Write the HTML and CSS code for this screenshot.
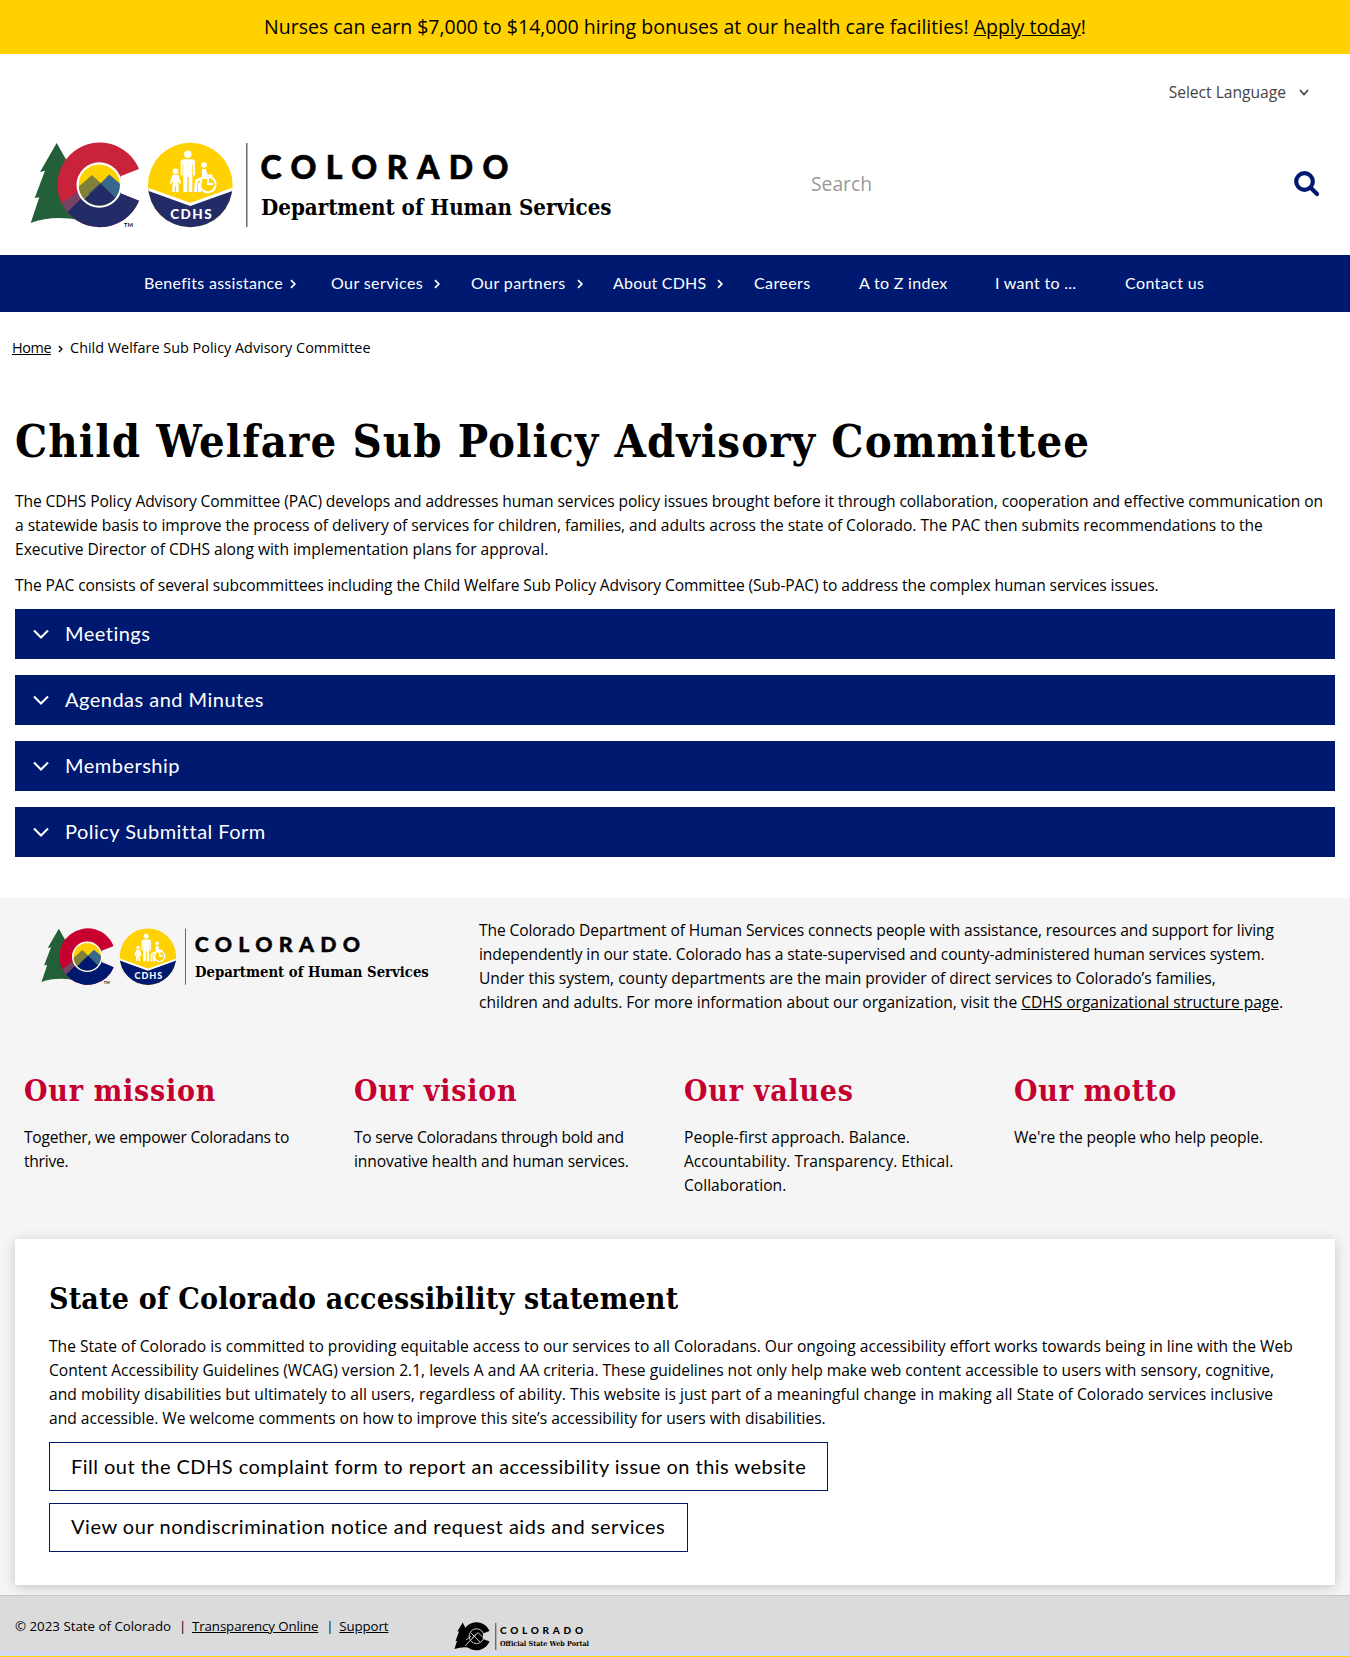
FILE: index.html
```html
<!DOCTYPE html>
<html lang="en">
<head>
<meta charset="utf-8">
<title>Child Welfare Sub Policy Advisory Committee</title>
<link rel="stylesheet" href="styles.css">
</head>
<body>
<svg class="sprite" aria-hidden="true">
  <defs>
    <clipPath id="scene"><circle cx="69.3" cy="43" r="20.6"/></clipPath>
    <clipPath id="seal"><circle cx="160.3" cy="43" r="42.3"/></clipPath>
    <clipPath id="cshape"><path d="M109 27A42.3 42.3 0 1 0 109 58.7L91 51.5V34Z"/></clipPath>
  </defs>
  <symbol id="chevron-right" viewBox="0 0 6 10"><path class="stroke" d="M1 1.2 4.8 5 1 8.8"/></symbol>
  <symbol id="chevron-down" viewBox="0 0 16 10"><path class="stroke" d="M1 1.5 8 8.5 15 1.5"/></symbol>
</svg>

<div class="banner"><span>Nurses can earn $7,000 to $14,000 hiring bonuses at our health care facilities! <a href="#">Apply today</a>!</span></div>

<header class="header">
  <div class="language"><span>Select Language</span><svg viewBox="0 0 10 7"><path class="stroke" d="M1 1 5 5.5 9 1"/></svg></div>
  <div class="brand-row">
    <svg class="logo" viewBox="0 0 590 88">
      <g id="logo">
        <path class="tree" d="M26.7 1 42 28 50 78Q22 73 .7 81L9.3 55.3 4.7 56 15 28.7 10 30Z"/>
        <g clip-path="url(#cshape)">
          <rect class="red" x="25" width="90" height="88"/>
          <path class="plum" d="M25 66 49 49 60 70 30 90Z"/>
          <path class="violet" d="M44 67 60 50 70 56 50 73Z"/>
          <path class="navy" d="M69 39 112 52V88H56L37.5 70Z"/>
        </g>
        <circle class="white" cx="69.3" cy="43" r="22.8"/>
        <g clip-path="url(#scene)">
          <rect class="gold" x="45" y="20" width="50" height="46"/>
          <path class="olive" d="M45 48 62 33 80 50 66 66H45Z"/>
          <path class="teal" d="M62 50 79.3 32.5 95 46V66H70Z"/>
          <path class="slate" d="M58 52 70.7 40.7 82 52Z"/>
          <path class="navy" d="M44 67 70.7 42 97 67Z"/>
        </g>
        <text class="tm" x="94" y="84.5" textLength="9">TM</text>
        <g clip-path="url(#seal)">
          <rect class="gold" x="117" width="87" height="88"/>
          <path class="navy" d="M117 46.5 160.3 63 204 46.5V88H117Z"/>
          <path class="vee" d="M116 46.5 160.3 62.5 205 46.5"/>
        </g>
        <g class="white">
          <circle cx="157.8" cy="12.3" r="3.7"/>
          <path d="M154 17.3h8q3 0 3 3V33.5h-2V22.5l-.6 0V50h-3.8V35h-1.4V50H153.2V22.5h-.6V33.5H150.6V20.3q0-3 3.4-3Z"/>
          <circle cx="145.5" cy="29.4" r="2.8"/>
          <path d="M142.5 33h6l2.6 8-1.6 1-2-3.5 1.2 6V50h-2.6v-6h-1.2v6h-2.6v-5.5l1-6-2 3.5-1.6-1Z"/>
          <circle cx="174" cy="23" r="2.8"/>
          <path d="M172 27h4l1.5 5.5h5v2h-5V37h-5.5Z"/>
          <path d="M171.5 35 173 37l-5.5 2.5-.5 10.5h-3l1-12ZM173.5 38.5l-2.5 2.5v9h-3v-9Z"/>
        </g>
        <path class="wheel" d="M179 34.8A7.8 7.8 0 1 1 171.5 38M178 35v7h5"/>
        <text class="seal-text" x="140.2" y="77" textLength="41.5">CDHS</text>
        <rect class="rule" x="216.2" y="1" width="1.2" height="84"/>
        <text class="wordmark" x="230.5" y="36.7" textLength="248">COLORADO</text>
        <text class="agency" x="231" y="73" textLength="350.5" lengthAdjust="spacingAndGlyphs">Department of Human Services</text>
      </g>
    </svg>
    <div class="search">
      <span>Search</span>
      <svg viewBox="0 0 26 26"><circle cx="10.5" cy="10.5" r="8.3"/><path d="m16.5 16.5 6.5 6.5"/></svg>
    </div>
  </div>
</header>

<nav class="nav">
  <a class="near">Benefits assistance<svg><use href="#chevron-right"/></svg></a>
  <a>Our services<svg><use href="#chevron-right"/></svg></a>
  <a>Our partners<svg><use href="#chevron-right"/></svg></a>
  <a class="near-wide">About CDHS<svg><use href="#chevron-right"/></svg></a>
  <a>Careers</a>
  <a class="near">A to Z index</a>
  <a class="near">I want to ...</a>
  <a>Contact us</a>
</nav>

<div class="breadcrumb"><a href="#">Home</a><svg><use href="#chevron-right"/></svg><span>Child Welfare Sub Policy Advisory Committee</span></div>

<main class="main">
  <h1>Child Welfare Sub Policy Advisory Committee</h1>
  <p><span class="snug">The CDHS Policy Advisory Committee (PAC) develops and addresses human services policy issues brought before it through collaboration, cooperation and effective communication on</span><br><span class="even">a statewide basis to improve the process of delivery of services for children, families, and adults across the state of Colorado. The PAC then submits recommendations to the<br>Executive Director of CDHS along with implementation plans for approval.</span></p>
  <p class="snug">The PAC consists of several subcommittees including the Child Welfare Sub Policy Advisory Committee (Sub-PAC) to address the complex human services issues.</p>
  <div class="accordion">
    <div class="panel"><svg><use href="#chevron-down"/></svg>Meetings</div>
    <div class="panel"><svg><use href="#chevron-down"/></svg>Agendas and Minutes</div>
    <div class="panel"><svg><use href="#chevron-down"/></svg>Membership</div>
    <div class="panel"><svg><use href="#chevron-down"/></svg>Policy Submittal Form</div>
  </div>
</main>

<section class="about">
  <div class="about-top">
    <svg class="logo-small" viewBox="0 0 590 88"><use href="#logo"/></svg>
    <p class="snug">The Colorado Department of Human Services connects people with assistance, resources and support for living<br>independently in our state. Colorado has a state-supervised and county-administered human services system.<br><span class="even">Under this system, county departments are the main provider of direct services to Colorado’s families,<br>children and adults. For more information about our organization, visit the <a href="#">CDHS organizational structure page</a>.</span></p>
  </div>
  <div class="columns">
    <div><h2>Our mission</h2><p class="tight">Together, we empower Coloradans to<br>thrive.</p></div>
    <div><h2>Our vision</h2><p><span class="tight">To serve Coloradans through bold and</span><br><span class="snug">innovative health and human services.</span></p></div>
    <div><h2>Our values</h2><p>People-first approach. Balance.<br>Accountability. Transparency. Ethical.<br>Collaboration.</p></div>
    <div><h2>Our motto</h2><p class="snug">We're the people who help people.</p></div>
  </div>
  <div class="card">
    <h2>State of Colorado accessibility statement</h2>
    <p>The State of Colorado is committed to providing equitable access to our services to all Coloradans. Our ongoing accessibility effort works towards being in line with the Web<br>Content Accessibility Guidelines (WCAG) version 2.1, levels A and AA criteria. These guidelines not only help make web content accessible to users with sensory, cognitive,<br><span class="loose">and mobility disabilities but ultimately to all users, regardless of ability. This website is just part of a meaningful change in making all State of Colorado services inclusive</span><br>and accessible. We welcome comments on how to improve this site’s accessibility for users with disabilities.</p>
    <a class="button complaint">Fill out the CDHS complaint form to report an accessibility issue on this website</a>
    <a class="button notice">View our nondiscrimination notice and request aids and services</a>
  </div>
</section>

<footer class="footer">
  <div class="legal"><span>© 2023 State of Colorado</span><i>|</i><a href="#">Transparency Online</a><i>|</i><a href="#">Support</a></div>
  <svg class="portal" viewBox="0 0 137 29">
    <path d="M8.7.5 13 9l5 17Q9 24 .5 27L3 19H1.6L5 9.5H3.4Z"/>
    <path d="M35.5 9A14 14 0 1 0 35.5 19.5L29 17V11.5Z"/>
    <circle class="line" cx="22.5" cy="14.2" r="7.4"/>
    <path class="line" d="M11 24 24 10.5l6 6M17 11l9 9M18 16.5l4-4M12 18l5-4"/>
    <rect x="41.5" y="1" width=".7" height="27"/>
    <text class="portal-name" x="46" y="11.5" textLength="83">COLORADO</text>
    <text class="portal-tag" x="46" y="23.8" textLength="89" lengthAdjust="spacingAndGlyphs">Official State Web Portal</text>
  </svg>
</footer>
</body>
</html>
```
FILE: styles.css
```css
* { box-sizing: border-box; }
body {
  margin: 0;
  background: #fff;
  color: #000;
  font: 15.6px/24px "Open Sans", "Noto Sans", sans-serif;
}
p, h1, h2 { margin: 0; white-space: nowrap; }
a { color: inherit; }
h1, h2 {
  font-family: "DejaVu Serif", "DejaVu Serif Condensed", serif;
  font-stretch: condensed;
  font-weight: 700;
}
.snug { letter-spacing: -.11px; }
.even { letter-spacing: -.03px; }
.tight { letter-spacing: -.25px; }
.loose { letter-spacing: .05px; }
.sprite { display: block; width: 0; height: 0; position: absolute; }
.stroke { fill: none; stroke: currentColor; stroke-width: 1.7; }

/* Logo artwork */
.logo { --brand-red: #c8233a; --brand-navy: #242c68; }
.logo-small { --brand-red: #c8002f; --brand-navy: #001970; }
.tree { fill: #235f38; }
.red { fill: var(--brand-red); }
.plum { fill: #764265; }
.violet { fill: #503a69; }
.navy { fill: var(--brand-navy); }
.gold { fill: #ffd100; }
.olive { fill: #818038; }
.teal { fill: #38688c; }
.slate { fill: #355672; }
.white { fill: #fff; }
.vee { fill: none; stroke: #fff; stroke-width: 3; }
.wheel { fill: none; stroke: #fff; stroke-width: 2; }
.rule { fill: #444; }
.tm { font: 700 5.5px "Lato", sans-serif; }
.seal-text { font: 900 13.5px "Lato", sans-serif; fill: #fff; }
.wordmark { font: 900 32px "Lato", sans-serif; stroke: #000; stroke-width: .6; }
.agency { font: 700 22px "DejaVu Serif", serif; font-stretch: condensed; }

.banner {
  height: 54px;
  background: #ffd100;
  font-size: 19.5px;
  line-height: 54px;
  text-align: center;
}
.header { height: 201px; padding: 26px 30px 0; }
.language {
  display: flex;
  align-items: center;
  justify-content: flex-end;
  gap: 13px;
  padding-right: 11px;
  color: #444;
}
.language svg { width: 10px; height: 7px; }
.brand-row {
  display: flex;
  justify-content: space-between;
  margin-top: 38px;
}
.logo { width: 590px; height: 88px; }
.search {
  display: flex;
  align-items: center;
  justify-content: space-between;
  width: 509px;
  height: 84px;
  color: #999;
  font-size: 19.3px;
}
.search svg { width: 26px; height: 26px; fill: none; stroke: #001970; stroke-width: 4.2; stroke-linecap: round; }

.nav {
  display: grid;
  grid-template-columns: 187px 140px 142px 141px 105px 136px 130px 90px;
  align-items: center;
  height: 57px;
  padding: 0 0 2px 144px;
  background: #001970;
  color: #fff;
  font-family: "Lato", sans-serif;
  font-size: 16px;
  letter-spacing: .4px;
}
.nav a { display: flex; align-items: center; gap: 11px; white-space: nowrap; }
.nav .near { gap: 7px; letter-spacing: .3px; }
.nav .near-wide { letter-spacing: .2px; }
.nav svg { width: 6px; height: 10px; margin-top: 2px; }

.breadcrumb {
  display: flex;
  align-items: center;
  gap: 7px;
  height: 72px;
  padding-left: 12px;
  font-size: 14.4px;
}
.breadcrumb a { letter-spacing: -.4px; }
.breadcrumb svg { width: 5px; height: 8px; margin-top: 2px; }

.main { height: 514px; padding: 30px 15px 0; }
h1 { font-size: 45px; line-height: 56px; letter-spacing: 1.06px; padding-bottom: 19px; }
.main p { margin-bottom: 12px; }
.accordion { display: grid; gap: 16px; }
.panel {
  display: flex;
  align-items: center;
  gap: 16px;
  height: 50px;
  padding: 0 0 2px 18px;
  background: #001970;
  color: #fff;
  font: 20px "Lato", sans-serif;
  letter-spacing: .48px;
}
.panel svg { width: 16px; height: 10px; margin-top: 2px; }
#chevron-down .stroke { stroke-width: 2.1; }

.about { height: 697px; padding: 20px 15px 0; background: #f5f5f5; }
.about-top { display: flex; height: 145px; padding-left: 26px; }
.logo-small { width: 393.5px; height: 58.7px; margin: 10px 44.5px 0 0; }
.columns { display: grid; grid-template-columns: repeat(4, 330px); height: 176px; padding-left: 9px; }
h2 { font-size: 30px; line-height: 56px; letter-spacing: .75px; }
.columns h2 { color: #c3002f; padding-bottom: 6px; }
.card {
  display: flex;
  flex-direction: column;
  align-items: flex-start;
  height: 346px;
  padding: 32px 34px 0;
  background: #fff;
  box-shadow: 0 2px 12px rgba(0, 0, 0, .2);
}
.card h2 { letter-spacing: .2px; padding-bottom: 7px; }
.button {
  height: 49px;
  margin-top: 12px;
  padding: 0 21px;
  border: 1px solid #001970;
  font: 20px/47px "Lato", sans-serif;
  letter-spacing: .47px;
  white-space: nowrap;
}
.complaint { width: 779px; }
.notice { width: 639px; line-height: 45px; letter-spacing: .53px; }

.footer {
  display: flex;
  height: 62px;
  padding-left: 15px;
  border-top: 1px solid #c4c4c4;
  border-bottom: 1px solid #ffd100;
  background: linear-gradient(#dbdbdb 55px, #d8dbee 55px);
}
.legal { display: flex; gap: 8px; width: 439px; padding-top: 18px; font-size: 13.3px; white-space: nowrap; }
.legal i { width: 5px; font-style: normal; }
.legal a { letter-spacing: -.12px; }
.portal { width: 137px; height: 29px; margin-top: 26px; overflow: visible; }
.line { fill: none; stroke: #dbdbdb; stroke-width: .9; }
.portal-name { font: 900 10px "Lato", sans-serif; }
.portal-tag { font: 700 7px "DejaVu Serif", serif; font-stretch: condensed; }
```
